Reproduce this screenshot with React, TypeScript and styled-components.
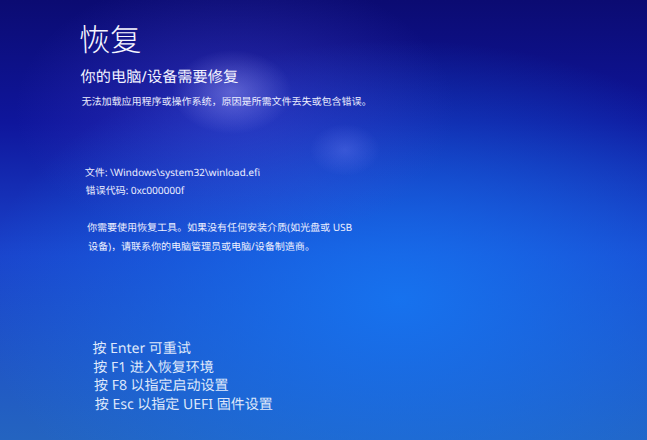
import styled, { createGlobalStyle } from "styled-components";

const GlobalStyle = createGlobalStyle`
  html, body {
    margin: 0;
    padding: 0;
    background: #0c0c70;
  }
  body {
    font-family: "Noto Sans", "Noto Sans CJK SC", sans-serif;
  }
`;

const hints = [
  "按 Enter 可重试",
  "按 F1 进入恢复环境",
  "按 F8 以指定启动设置",
  "按 Esc 以指定 UEFI 固件设置",
];

export default function App() {
  return (
    <>
      <GlobalStyle />
      <Screen>
        <Content>
          <Title>恢复</Title>
          <Subtitle>你的电脑/设备需要修复</Subtitle>
          <Reason>无法加载应用程序或操作系统，原因是所需文件丢失或包含错误。</Reason>
          <Details>
            <Line>文件: \Windows\system32\winload.efi</Line>
            <Line>错误代码: 0xc000000f</Line>
          </Details>
          <Para>
            你需要使用恢复工具。如果没有任何安装介质(如光盘或 USB
            <br />
            设备)，请联系你的电脑管理员或电脑/设备制造商。
          </Para>
          <Hints>
            {hints.map((h) => (
              <Hint key={h}>{h}</Hint>
            ))}
          </Hints>
        </Content>
      </Screen>
    </>
  );
}

const Screen = styled.div`
  width: 647px;
  height: 440px;
  overflow: hidden;
  box-sizing: border-box;
  padding: 17px 0 0 78px;
  background:
    radial-gradient(ellipse 60px 42px at 232px 92px, rgba(160, 160, 250, 0.45), transparent),
    radial-gradient(ellipse 35px 26px at 345px 150px, rgba(120, 135, 250, 0.3), transparent),
    radial-gradient(ellipse 220px 140px at 235px 110px, rgba(80, 80, 225, 0.38), transparent),
    radial-gradient(ellipse 420px 260px at 400px 300px, rgba(22, 118, 242, 0.9), transparent),
    linear-gradient(180deg, #0b0b72 0%, #0f169c 28%, #1a44cc 58%, #2464c0 100%);
`;

const Content = styled.div`
  display: flex;
  flex-direction: column;
  transform: skewX(2.5deg);
  transform-origin: 0 0;
  color: #eef0ff;
`;

const Title = styled.div`
  font-family: "Noto Sans CJK SC", sans-serif;
  font-size: 31px;
  font-weight: 300;
  line-height: 41px;
  color: #f6f6ff;
`;

const Subtitle = styled.div`
  margin-top: 7px;
  font-size: 15.2px;
  line-height: 22px;
  color: #f2f2ff;
`;

const Line = styled.div`
  font-size: 10px;
  line-height: 18px;
  white-space: nowrap;
`;

const Reason = styled(Line)`
  margin-top: 5px;
`;

const Details = styled.div`
  margin-top: 53px;
  display: flex;
  flex-direction: column;
`;

const Para = styled.div`
  margin-top: 19px;
  font-size: 10px;
  line-height: 19px;
`;

const Hints = styled.div`
  margin-top: 83px;
  display: flex;
  flex-direction: column;
`;

const Hint = styled.div`
  font-size: 14px;
  line-height: 18.5px;
  color: #dfe8fb;
  white-space: nowrap;
`;
